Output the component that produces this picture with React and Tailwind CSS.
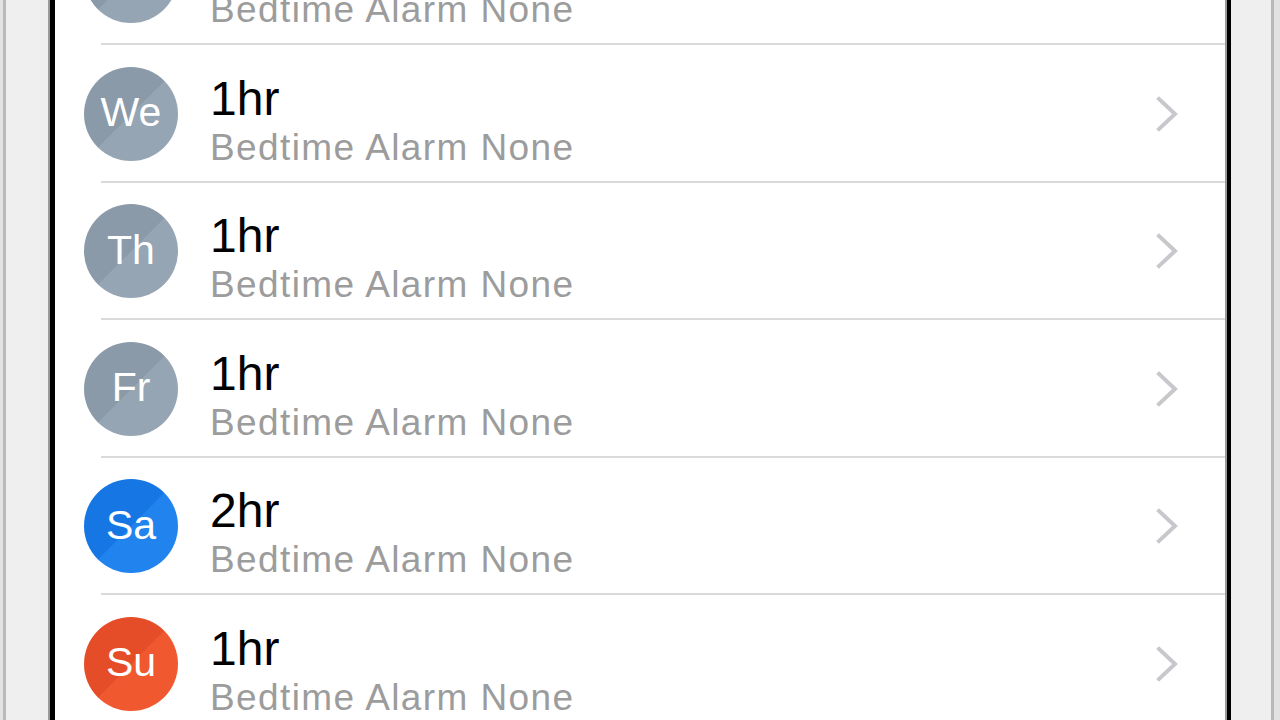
const days = [
  { abbr: 'Tu', hours: '1hr', tone: 'gray' },
  { abbr: 'We', hours: '1hr', tone: 'gray' },
  { abbr: 'Th', hours: '1hr', tone: 'gray' },
  { abbr: 'Fr', hours: '1hr', tone: 'gray' },
  { abbr: 'Sa', hours: '2hr', tone: 'blue' },
  { abbr: 'Su', hours: '1hr', tone: 'orange' },
];

const tones = {
  gray: 'bg-[linear-gradient(135deg,#8a9aa9_50%,#95a5b4_50%)]',
  blue: 'bg-[linear-gradient(135deg,#1676e4_50%,#2183ee_50%)]',
  orange: 'bg-[linear-gradient(135deg,#e44d27_50%,#f0582f_50%)]',
};

function Chevron() {
  return (
    <svg width="26" height="36" viewBox="0 0 26 36" fill="none" className="shrink-0">
      <path d="M4 3 L20 18 L4 33" stroke="#c8c8cc" strokeWidth="4" strokeLinecap="square" />
    </svg>
  );
}

function DayRow({ day }) {
  return (
    <div className="h-[137.5px] flex items-center pl-[29px] pr-[44px] relative">
      <div
        className={`w-[94px] h-[94px] rounded-full flex items-center justify-center shrink-0 text-white text-[41px] leading-none ${tones[day.tone]}`}
      >
        <span className="-mt-[2px]">{day.abbr}</span>
      </div>
      <div className="flex-1 ml-[32px] flex flex-col pt-[14px]">
        <span className="text-[48px] leading-[50px] text-black">{day.hours}</span>
        <span className="mt-[4px] text-[37px] leading-[40px] tracking-[1.4px] text-[#9c9c9c]">Bedtime Alarm None</span>
      </div>
      <Chevron />
      <div className="absolute left-[46px] right-0 bottom-0 h-[2px] bg-[#dadada]" />
    </div>
  );
}

export default function App() {
  return (
    <div
      className="w-[1280px] h-[720px] overflow-hidden flex bg-white"
      style={{ fontFamily: '"Liberation Sans", Arial, sans-serif' }}
    >
      <div className="w-[50px] shrink-0 flex">
        <div className="w-[3px] bg-[#e2e2e2]" />
        <div className="w-[3px] bg-[#b9b9b9]" />
        <div className="flex-1 bg-[#efefef]" />
        <div className="w-[2px] bg-[#9a9a9a]" />
      </div>
      <div className="w-[5px] shrink-0 bg-black" />
      <div className="flex-1 overflow-hidden">
        <div className="-mt-[92.5px]">
          {days.map((d) => (
            <DayRow key={d.abbr} day={d} />
          ))}
        </div>
      </div>
      <div className="w-[2px] shrink-0 bg-[#9a9a9a]" />
      <div className="w-[4px] shrink-0 bg-black" />
      <div className="w-[49px] shrink-0 flex">
        <div className="flex-1 bg-[#efefef]" />
        <div className="w-[3px] bg-[#b9b9b9]" />
        <div className="w-[6px] bg-[#e2e2e2]" />
      </div>
    </div>
  );
}
